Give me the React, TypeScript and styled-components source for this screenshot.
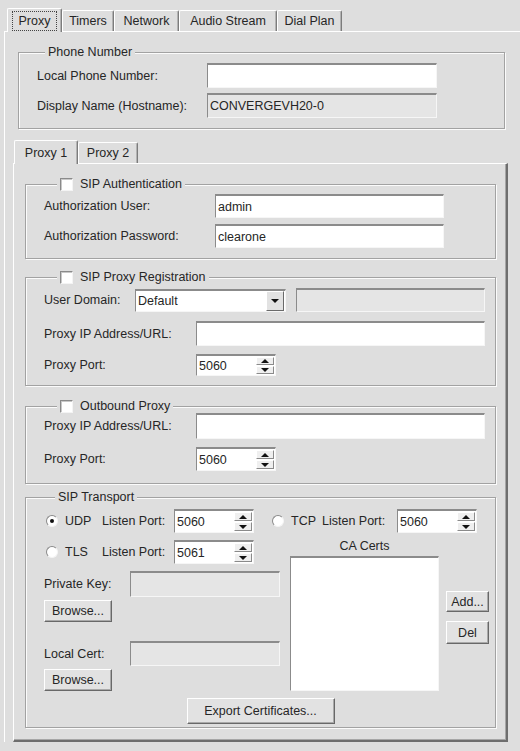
import styled, { createGlobalStyle } from 'styled-components'

const GlobalStyle = createGlobalStyle`
  html, body {
    margin: 0;
    padding: 0;
    background: #dedede;
    overflow: hidden;
  }
  body {
    font-family: 'Liberation Sans', Arial, sans-serif;
    font-size: 12.5px;
    color: #262626;
  }
  *, *::before, *::after {
    box-sizing: border-box;
  }
`

const Page = styled.div`
  width: 520px;
  height: 751px;
  overflow: hidden;
  padding: 8px 0 0 4px;
`

const TabBar = styled.div<{ $ml?: number; $mt?: number }>`
  display: flex;
  align-items: flex-end;
  height: 23px;
  margin: ${p => p.$mt || 0}px 0 0 ${p => p.$ml || 0}px;
  position: relative;
  z-index: 2;
`

const Tab = styled.div<{ $active?: boolean; $w: number }>`
  width: ${p => p.$w}px;
  height: ${p => (p.$active ? 24 : 21)}px;
  margin-bottom: ${p => (p.$active ? -1 : 0)}px;
  display: flex;
  align-items: center;
  justify-content: center;
  background: #dedede;
  border-top: 1px solid #fff;
  border-left: 1px solid #fff;
  border-right: 1px solid #7c7c7c;
  box-shadow: inset -1px 0 0 #b2b2b2;
  border-radius: 2px 2px 0 0;
  white-space: nowrap;
`

const TabText = styled.span<{ $focus?: boolean }>`
  padding: 2px 6px;
  border: 1px dotted ${p => (p.$focus ? '#444' : 'transparent')};
`

const MainPanel = styled.div`
  width: 530px;
  border-top: 1px solid #fff;
  border-left: 1px solid #fff;
  padding-left: 8px;
`

const InnerPanel = styled.div`
  width: 495px;
  height: 579px;
  border-top: 1px solid #fff;
  border-left: 1px solid #fff;
  border-right: 2px solid #6e6e6e;
  border-bottom: 2px solid #6e6e6e;
  box-shadow: inset -1px -1px 0 #a6a6a6;
  padding: 0 10px 0 11px;
`

const Group = styled.fieldset<{ $mt: number; $pt: number; $pb: number; $w?: number }>`
  margin: ${p => p.$mt}px 0 0 ${p => (p.$w ? 5 : 0)}px;
  ${p => (p.$w ? `width: ${p.$w}px;` : '')}
  padding: ${p => p.$pt}px 8px ${p => p.$pb}px 18px;
  border: 1px solid #a2a2a2;
  box-shadow: inset 1px 1px 0 #fbfbfb, 1px 1px 0 #fbfbfb;
  min-width: 0;
`

const Legend = styled.legend<{ $ml: number }>`
  margin-left: ${p => p.$ml}px;
  padding: 0 3px;
  height: 14px;
  line-height: 14px;
  display: flex;
  align-items: center;
  gap: 7px;
  background: #dedede;
`

const Row = styled.div<{ $h: number; $mt?: number }>`
  display: flex;
  align-items: center;
  height: ${p => p.$h}px;
  margin-top: ${p => p.$mt || 0}px;
`

const Label = styled.span<{ $w: number }>`
  width: ${p => p.$w}px;
  flex-shrink: 0;
  white-space: nowrap;
`

const Field = styled.div<{ $w: number; $h: number; $off?: boolean; $ml?: number }>`
  width: ${p => p.$w}px;
  height: ${p => p.$h}px;
  margin-left: ${p => p.$ml || 0}px;
  flex-shrink: 0;
  display: flex;
  align-items: center;
  padding: 0 1px;
  background: ${p => (p.$off ? '#e5e5e5' : '#fff')};
  border-top: 2px solid #8b8b8b;
  border-left: 1px solid #8b8b8b;
  border-right: 1px solid #f6f6f6;
  border-bottom: 1px solid #f6f6f6;
  white-space: nowrap;
  overflow: hidden;
`

const FieldText = styled.span`
  flex: 1;
  padding-left: 1px;
`

const SpinArrows = styled.div`
  width: 18px;
  height: 100%;
  display: flex;
  flex-direction: column;
  gap: 1px;
  padding: 1px 0;
`

const SmallBtn = styled.div`
  flex: 1;
  display: flex;
  align-items: center;
  justify-content: center;
  background: #efefef;
  border-top: 1px solid #fff;
  border-left: 1px solid #fff;
  border-right: 1px solid #8a8a8a;
  border-bottom: 1px solid #8a8a8a;
`

const Tri = styled.span<{ $up?: boolean; $size?: number }>`
  width: 0;
  height: 0;
  border-left: ${p => p.$size || 4}px solid transparent;
  border-right: ${p => p.$size || 4}px solid transparent;
  ${p =>
    p.$up
      ? `border-bottom: ${p.$size || 4}px solid #111;`
      : `border-top: ${p.$size || 4}px solid #111;`}
`

const DropBtn = styled.div`
  width: 18px;
  height: 100%;
  display: flex;
  align-items: center;
  justify-content: center;
  background: #e2e2e2;
  border-top: 1px solid #fff;
  border-left: 1px solid #fff;
  border-right: 1px solid #6a6a6a;
  border-bottom: 1px solid #6a6a6a;
`

const Check = styled.span`
  width: 13px;
  height: 13px;
  flex-shrink: 0;
  background: #fff;
  border-top: 1px solid #8a8a8a;
  border-left: 1px solid #8a8a8a;
  border-right: 1px solid #f4f4f4;
  border-bottom: 1px solid #f4f4f4;
  box-shadow: inset 1px 1px 0 #c8c8c8;
`

const RadioItem = styled.div<{ $w: number; $ml?: number }>`
  width: ${p => p.$w}px;
  margin-left: ${p => p.$ml || 0}px;
  flex-shrink: 0;
  display: flex;
  align-items: center;
  gap: 7px;
  padding-left: 2px;
`

const Radio = styled.span<{ $on?: boolean }>`
  width: 12px;
  height: 12px;
  border-radius: 50%;
  flex-shrink: 0;
  display: flex;
  align-items: center;
  justify-content: center;
  background: #fff;
  border: 1px solid;
  border-color: #8a8a8a #f4f4f4 #f4f4f4 #8a8a8a;
  &::after {
    content: '';
    width: 4px;
    height: 4px;
    border-radius: 50%;
    background: ${p => (p.$on ? '#111' : 'transparent')};
  }
`

const Button = styled.div<{ $w: number; $h: number; $mt?: number }>`
  width: ${p => p.$w}px;
  height: ${p => p.$h}px;
  margin-top: ${p => p.$mt || 0}px;
  flex-shrink: 0;
  display: flex;
  align-items: center;
  justify-content: center;
  background: #e2e2e2;
  border: 1px solid;
  border-color: #fff #686868 #686868 #fff;
  box-shadow: inset -1px -1px 0 #a9a9a9;
  white-space: nowrap;
`

const TransportBody = styled.div`
  display: flex;
  margin-top: 7px;
`

const LeftCol = styled.div`
  width: 236px;
  display: flex;
  flex-direction: column;
`

const CertsCol = styled.div`
  margin-left: 10px;
  display: flex;
  flex-direction: column;
  align-items: center;
`

const Caption = styled.div`
  height: 16px;
  line-height: 12px;
`

const ListBox = styled.div`
  width: 149px;
  height: 135px;
  background: #fff;
  border-top: 2px solid #8b8b8b;
  border-left: 1px solid #8b8b8b;
  border-right: 1px solid #f6f6f6;
  border-bottom: 1px solid #f6f6f6;
`

const SideButtons = styled.div`
  margin-left: 7px;
  padding-top: 51px;
  display: flex;
  flex-direction: column;
  gap: 9px;
`

const ExportRow = styled.div`
  display: flex;
  justify-content: center;
  margin: 7px 0 0 -10px;
`

const Spin = ({ value, h }: { value: string; h: number }) => (
  <Field $w={80} $h={h}>
    <FieldText>{value}</FieldText>
    <SpinArrows>
      <SmallBtn><Tri $up $size={4} /></SmallBtn>
      <SmallBtn><Tri $size={4} /></SmallBtn>
    </SpinArrows>
  </Field>
)

export default function App() {
  return (
    <Page>
      <GlobalStyle />
      <TabBar $ml={3}>
        <Tab $active $w={55}><TabText $focus>Proxy</TabText></Tab>
        <Tab $w={52}><TabText>Timers</TabText></Tab>
        <Tab $w={65}><TabText>Network</TabText></Tab>
        <Tab $w={98}><TabText>Audio Stream</TabText></Tab>
        <Tab $w={65}><TabText>Dial Plan</TabText></Tab>
      </TabBar>
      <MainPanel>
        <Group $mt={13} $pt={4} $pb={10} $w={487}>
          <Legend $ml={8}>Phone Number</Legend>
          <Row $h={25}>
            <Label $w={170}>Local Phone Number:</Label>
            <Field $w={230} $h={25} />
          </Row>
          <Row $h={25} $mt={5}>
            <Label $w={170}>Display Name (Hostname):</Label>
            <Field $w={230} $h={25} $off>
              <FieldText>CONVERGEVH20-0</FieldText>
            </Field>
          </Row>
        </Group>

        <TabBar $mt={11} $ml={1}>
          <Tab $active $w={64}><TabText>Proxy 1</TabText></Tab>
          <Tab $w={60}><TabText>Proxy 2</TabText></Tab>
        </TabBar>
        <InnerPanel>
          <Group $mt={13} $pt={3} $pb={10}>
            <Legend $ml={13}><Check />SIP Authentication</Legend>
            <Row $h={24}>
              <Label $w={171}>Authorization User:</Label>
              <Field $w={229} $h={24}><FieldText>admin</FieldText></Field>
            </Row>
            <Row $h={24} $mt={6}>
              <Label $w={171}>Authorization Password:</Label>
              <Field $w={229} $h={24}><FieldText>clearone</FieldText></Field>
            </Row>
          </Group>

          <Group $mt={11} $pt={4} $pb={9}>
            <Legend $ml={13}><Check />SIP Proxy Registration</Legend>
            <Row $h={24}>
              <Label $w={91}>User Domain:</Label>
              <Field $w={151} $h={23}>
                <FieldText>Default</FieldText>
                <DropBtn><Tri $size={4} /></DropBtn>
              </Field>
              <Field $w={189} $h={24} $off $ml={10} />
            </Row>
            <Row $h={25} $mt={9}>
              <Label $w={152}>Proxy IP Address/URL:</Label>
              <Field $w={289} $h={25} />
            </Row>
            <Row $h={22} $mt={8}>
              <Label $w={152}>Proxy Port:</Label>
              <Spin value="5060" h={22} />
            </Row>
          </Group>

          <Group $mt={13} $pt={0} $pb={12}>
            <Legend $ml={13}><Check />Outbound Proxy</Legend>
            <Row $h={26}>
              <Label $w={152}>Proxy IP Address/URL:</Label>
              <Field $w={289} $h={26} />
            </Row>
            <Row $h={24} $mt={8}>
              <Label $w={152}>Proxy Port:</Label>
              <Spin value="5060" h={24} />
            </Row>
          </Group>

          <Group $mt={6} $pt={5} $pb={3}>
            <Legend $ml={11}>SIP Transport</Legend>
            <Row $h={24}>
              <RadioItem $w={58}><Radio $on />UDP</RadioItem>
              <Label $w={72}>Listen Port:</Label>
              <Spin value="5060" h={24} />
              <RadioItem $w={52} $ml={16}><Radio />TCP</RadioItem>
              <Label $w={75}>Listen Port:</Label>
              <Spin value="5060" h={24} />
            </Row>
            <TransportBody>
              <LeftCol>
                <Row $h={24}>
                  <RadioItem $w={58}><Radio />TLS</RadioItem>
                  <Label $w={72}>Listen Port:</Label>
                  <Spin value="5061" h={24} />
                </Row>
                <Row $h={26} $mt={7}>
                  <Label $w={86}>Private Key:</Label>
                  <Field $w={150} $h={26} $off />
                </Row>
                <Button $w={68} $h={22} $mt={3}>Browse...</Button>
                <Row $h={25} $mt={19}>
                  <Label $w={86}>Local Cert:</Label>
                  <Field $w={150} $h={25} $off />
                </Row>
                <Button $w={68} $h={22} $mt={3}>Browse...</Button>
              </LeftCol>
              <CertsCol>
                <Caption>CA Certs</Caption>
                <ListBox />
              </CertsCol>
              <SideButtons>
                <Button $w={43} $h={21}>Add...</Button>
                <Button $w={43} $h={23}>Del</Button>
              </SideButtons>
            </TransportBody>
            <ExportRow>
              <Button $w={148} $h={26}>Export Certificates...</Button>
            </ExportRow>
          </Group>
        </InnerPanel>
      </MainPanel>
    </Page>
  )
}
